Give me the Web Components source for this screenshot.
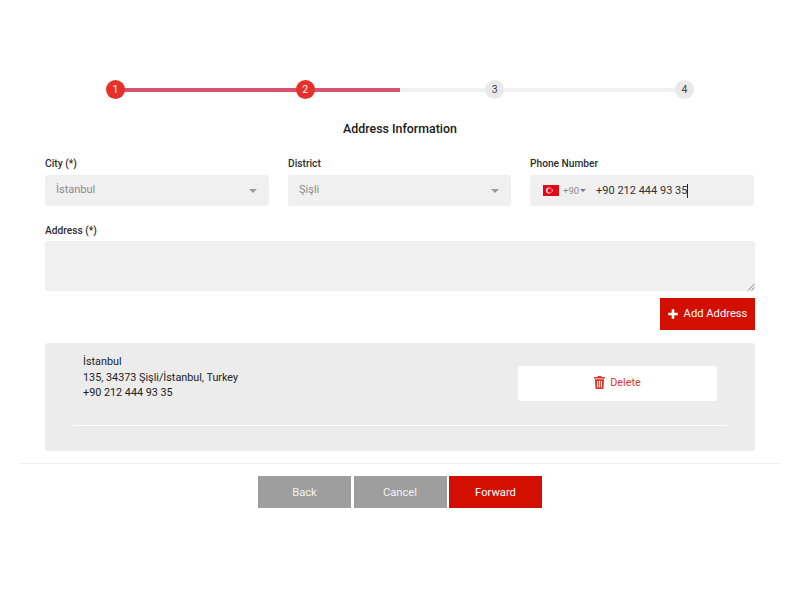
<!DOCTYPE html>
<html lang="en">
<head>
<meta charset="utf-8">
<title>Address Information</title>
<style>
  html, body { margin: 0; background: #fff; }
  body { font-family: Roboto, "Liberation Sans", sans-serif; color: #212529; }
</style>
</head>
<body>
<checkout-page>
  <step-bar current="2" total="4"></step-bar>
  <h2 slot="title">Address Information</h2>
  <form-field slot="fields" label="City (*)"><select-box value="İstanbul"></select-box></form-field>
  <form-field slot="fields" label="District"><select-box value="Şişli"></select-box></form-field>
  <form-field slot="fields" label="Phone Number"><phone-box code="+90" value="+90 212 444 93 35"></phone-box></form-field>
  <form-field slot="address" label="Address (*)"><text-box></text-box></form-field>
  <action-button slot="add" kind="add">Add Address</action-button>
  <address-card slot="cards">
    <div>İstanbul</div>
    <div>135, 34373 Şişli/İstanbul, Turkey</div>
    <div>+90 212 444 93 35</div>
  </address-card>
  <action-button slot="nav" kind="muted">Back</action-button>
  <action-button slot="nav" kind="muted">Cancel</action-button>
  <action-button slot="nav" kind="primary">Forward</action-button>
</checkout-page>

<script>
class CheckoutPage extends HTMLElement {
  constructor() {
    super();
    this.attachShadow({ mode: 'open' }).innerHTML = `
    <style>
      :host { display: block; width: 800px; height: 600px; box-sizing: border-box; padding-top: 80px; overflow: hidden; }
      .title { text-align: center; margin-top: 20px; height: 20px; }
      ::slotted(h2) { margin: 0; font-size: 12.4px; line-height: 20px; font-weight: 500; color: #1a1a1a; }
      .body { padding: 0 45px; }
      .fields { display: grid; grid-template-columns: 224px 223px 224px; column-gap: 19px; margin-top: 17.5px; }
      .address { margin-top: 17.500px; --label-gap: 3.500px; }
      .add { display: flex; justify-content: flex-end; margin-top: 7px; }
      .cards { margin-top: 13px; }
      hr { border: 0; border-top: 1px solid #f0f0f0; margin: 12px 20px 12px; }
      .nav { display: flex; justify-content: center; gap: 2.5px; }
    </style>
    <slot></slot>
    <div class="title"><slot name="title"></slot></div>
    <div class="body">
      <div class="fields"><slot name="fields"></slot></div>
      <div class="address"><slot name="address"></slot></div>
      <div class="add"><slot name="add"></slot></div>
      <div class="cards"><slot name="cards"></slot></div>
    </div>
    <hr>
    <div class="nav"><slot name="nav"></slot></div>
    `;
  }
}

class StepBar extends HTMLElement {
  connectedCallback() {
    const total = Number(this.getAttribute('total'));
    const current = Number(this.getAttribute('current'));
    let dots = '';
    for (let i = 1; i <= total; i++) {
      dots += `<span class="dot ${i <= current ? 'on' : ''}">${i}</span>`;
    }
    this.attachShadow({ mode: 'open' }).innerHTML = `
    <style>
      :host { display: block; margin: 0 106px; height: 19px; position: relative; }
      .track, .fill { position: absolute; left: 9px; top: 7.5px; height: 4px; }
      .track { right: 9px; background: #f1f1f1; }
      .fill { width: 285px; background: #d6536d; }
      .dots { position: relative; display: flex; justify-content: space-between; }
      .dot { width: 19px; height: 19px; border-radius: 50%; background: #e9e9e9; color: #444;
        font-size: 10.5px; line-height: 19px; text-align: center; }
      .dot.on { background: #e7302a; color: #fff; }
    </style>
    <div class="track"></div>
    <div class="fill"></div>
    <div class="dots">${dots}</div>
    `;
  }
}

class FormField extends HTMLElement {
  connectedCallback() {
    this.attachShadow({ mode: 'open' }).innerHTML = `
    <style>
      :host { display: block; }
      label { display: block; font-size: 10.2px; line-height: 14px; font-weight: 500; color: #2b2f33; margin-bottom: var(--label-gap, 4.5px); }
    </style>
    <label>${this.getAttribute('label')}</label>
    <slot></slot>
    `;
  }
}

class SelectBox extends HTMLElement {
  connectedCallback() {
    this.attachShadow({ mode: 'open' }).innerHTML = `
    <style>
      :host { display: flex; align-items: center; justify-content: space-between; height: 31px; box-sizing: border-box;
        padding: 0 12px 0 11px; background: #f0f0f0; border-radius: 3px; color: #8b8b8b; font-size: 11px; }
      span { margin-bottom: 3px; }
      i { width: 0; height: 0; border: 4px solid transparent; border-top: 4px solid #999; border-bottom: 0; }
    </style>
    <span>${this.getAttribute('value')}</span>
    <i></i>
    `;
  }
}

class PhoneBox extends HTMLElement {
  connectedCallback() {
    this.attachShadow({ mode: 'open' }).innerHTML = `
    <style>
      :host { display: flex; align-items: center; height: 31px; box-sizing: border-box; padding-left: 13px;
        background: #f0f0f0; border-radius: 3px; font-size: 11px; color: #333; }
      svg { width: 16px; height: 11px; display: block; }
      .code { margin-left: 4px; font-size: 9.5px; color: #8c8c8c; }
      i { width: 0; height: 0; border: 3.5px solid transparent; border-top: 3.5px solid #777; border-bottom: 0; margin-left: 1px; }
      .num { margin-left: 10px; border-right: 1px solid #222; line-height: 14px; }
    </style>
    <svg viewBox="0 0 16 11" aria-hidden="true">
      <rect width="16" height="11" fill="#e30a17"/>
      <circle cx="6" cy="5.5" r="2.9" fill="#fff"/>
      <circle cx="6.7" cy="5.5" r="2.3" fill="#e30a17"/>
      <polygon points="8.100,5.500 10.200,4.800 9.200,6.700 9.200,4.300 10.200,6.200" fill="#fff"/>
    </svg>
    <span class="code">${this.getAttribute('code')}</span>
    <i></i>
    <span class="num">${this.getAttribute('value')}</span>
    `;
  }
}

class TextBox extends HTMLElement {
  connectedCallback() {
    this.attachShadow({ mode: 'open' }).innerHTML = `
    <style>
      :host { display: block; height: 50px; position: relative; background: #f0f0f0; border-radius: 3px; }
      svg { position: absolute; right: 0; bottom: 0; width: 8px; height: 8px; }
    </style>
    <svg viewBox="0 0 8 8" aria-hidden="true"><path d="M1 7.500 7.500 1M4.500 7.500 7.500 4.500" stroke="#777" stroke-width=".9" fill="none"/></svg>
    `;
  }
}

class AddressCard extends HTMLElement {
  connectedCallback() {
    this.attachShadow({ mode: 'open' }).innerHTML = `
    <style>
      :host { display: block; height: 108px; box-sizing: border-box; padding: 11px 28px 0; background: #ececec; border-radius: 3px; }
      .row { display: flex; justify-content: space-between; height: 71px; }
      .info { padding-left: 10px; font-size: 10.8px; line-height: 15.5px; color: #222; }
      .divider { height: 1px; background: #fff; }
      .side { padding: 12px 10px 0 0; }
    </style>
    <div class="row">
      <div class="info"><slot></slot></div>
      <div class="side"><action-button kind="delete">Delete</action-button></div>
    </div>
    <div class="divider"></div>
    `;
  }
}

class ActionButton extends HTMLElement {
  connectedCallback() {
    const kind = this.getAttribute('kind');
    let icon = '';
    if (kind === 'add') {
      icon = '<svg viewBox="0 0 10 10" width="10" height="10" aria-hidden="true"><path d="M5 .2v9.600M.2 5h9.600" stroke="#fff" stroke-width="2.600"/></svg>';
    }
    if (kind === 'delete') {
      icon = '<svg viewBox="0 0 10 12" width="11" height="13" aria-hidden="true"><path fill="#d9352c" d="M3.500 0h3l.5 1h3v1.200H0V1h3zM.8 3h8.400l-.5 8.200c0 .5-.4.8-.9.8H2.200c-.5 0-.9-.3-.9-.8zM2.700 4.500v6h1v-6zm1.800 0v6h1v-6zm1.800 0v6h1v-6z"/></svg>';
    }
    this.attachShadow({ mode: 'open' }).innerHTML = `
    <style>
      :host { display: inline-flex; align-items: center; justify-content: center; box-sizing: border-box; font-size: 11.2px; }
      :host([kind="add"]) { width: 95px; height: 32px; gap: 6px; padding-bottom: 1px; background: #d20f00; color: #fff; }
      :host([kind="delete"]) { width: 199px; height: 35px; gap: 5px; padding-bottom: 3px; background: #fff; color: #d9352c; border-radius: 2px; font-size: 10.8px; }
      :host([kind="muted"]), :host([kind="primary"]) { width: 93px; height: 32px; color: #fff; }
      :host([kind="muted"]) { background: #9e9e9e; color: #f2f2f2; }
      :host([kind="primary"]) { background: #d20f00; }
      svg { display: block; }
    </style>
    ${icon}<slot></slot>
    `;
  }
}

customElements.define('checkout-page', CheckoutPage);
customElements.define('step-bar', StepBar);
customElements.define('form-field', FormField);
customElements.define('select-box', SelectBox);
customElements.define('phone-box', PhoneBox);
customElements.define('text-box', TextBox);
customElements.define('address-card', AddressCard);
customElements.define('action-button', ActionButton);
</script>
</body>
</html>
